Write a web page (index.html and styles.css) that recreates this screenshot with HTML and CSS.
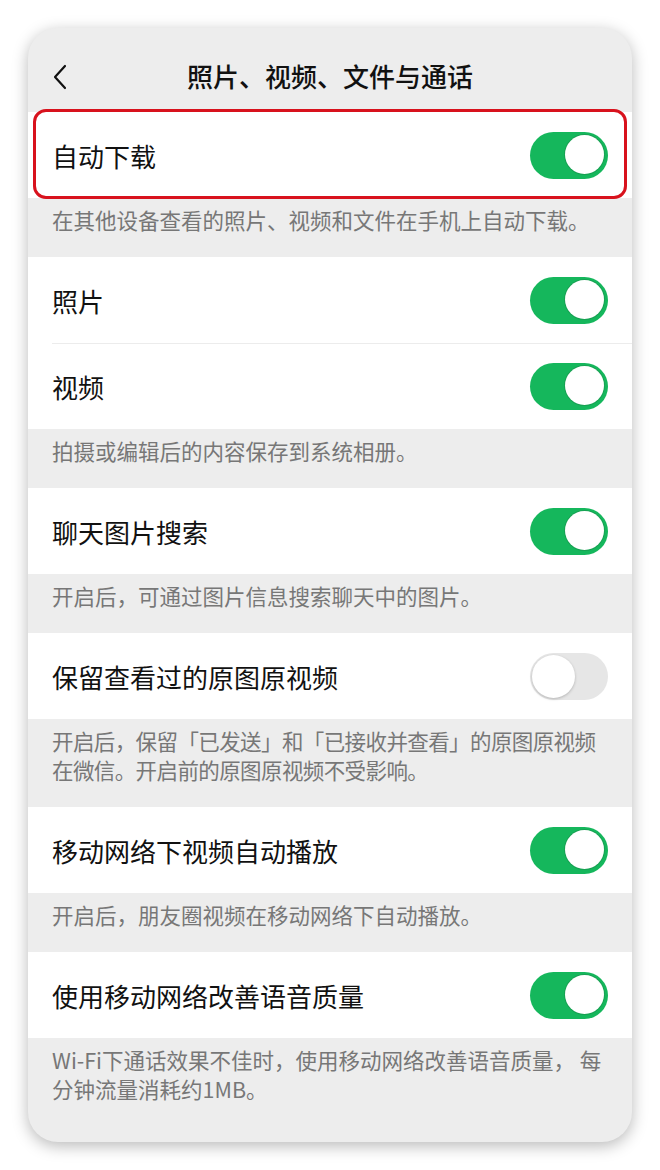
FILE: index.html
```html
<!DOCTYPE html>
<html lang="zh-CN">

<head>
    <meta charset="UTF-8">
    <meta name="viewport" content="width=device-width, initial-scale=1.0">
    <title>照片、视频、文件与通话</title>
    <link rel="stylesheet" href="styles.css">
</head>

<body>

    <div class="phone">
        <div class="nav">
            <svg class="back" width="16" height="26" viewBox="0 0 16 26">
                <path d="M13 2 L3 13 L13 24" fill="none" stroke="#111" stroke-width="2.2" stroke-linecap="round" stroke-linejoin="round"/>
            </svg>
            <div class="title">照片、视频、文件与通话</div>
        </div>

        <div class="group">
            <div class="row marked">
                <span class="label">自动下载</span>
                <span class="switch on"></span>
                <div class="highlight"></div>
            </div>
        </div>
        <p class="note">在其他设备查看的照片、视频和文件在手机上自动下载。</p>

        <div class="group">
            <div class="row">
                <span class="label">照片</span>
                <span class="switch on"></span>
            </div>
            <div class="row divided">
                <span class="label">视频</span>
                <span class="switch on"></span>
            </div>
        </div>
        <p class="note">拍摄或编辑后的内容保存到系统相册。</p>

        <div class="group">
            <div class="row">
                <span class="label">聊天图片搜索</span>
                <span class="switch on"></span>
            </div>
        </div>
        <p class="note">开启后，可通过图片信息搜索聊天中的图片。</p>

        <div class="group">
            <div class="row">
                <span class="label">保留查看过的原图原视频</span>
                <span class="switch"></span>
            </div>
        </div>
        <p class="note tight">开启后，保留「已发送」和「已接收并查看」的原图原视频在微信。开启前的原图原视频不受影响。</p>

        <div class="group">
            <div class="row">
                <span class="label">移动网络下视频自动播放</span>
                <span class="switch on"></span>
            </div>
        </div>
        <p class="note">开启后，朋友圈视频在移动网络下自动播放。</p>

        <div class="group">
            <div class="row">
                <span class="label">使用移动网络改善语音质量</span>
                <span class="switch on"></span>
            </div>
        </div>
        <p class="note">Wi-Fi下通话效果不佳时，使用移动网络改善语音质量， 每分钟流量消耗约1MB。</p>
    </div>

</body>

</html>
```

FILE: styles.css
```css
body {
    margin: 0;
    padding: 28px;
    background-color: #ffffff;
    font-family: "Noto Sans CJK SC", "Noto Sans", sans-serif;
    color: #111111;
}

.phone {
    width: 604px;
    height: 1114px;
    background-color: #ededed;
    border-radius: 30px;
    box-shadow: 0 4px 16px rgba(0, 0, 0, 0.28);
    overflow: hidden;
}

.nav {
    position: relative;
    height: 84px;
    display: flex;
    align-items: center;
    justify-content: center;
}

.back {
    position: absolute;
    left: 24px;
    top: 36px;
}

.title {
    font-size: 26px;
    font-weight: 500;
    margin-top: 10px;
}

.group {
    background-color: #ffffff;
}

.row {
    position: relative;
    height: 86px;
    display: flex;
    align-items: center;
    justify-content: space-between;
    padding: 0 24px;
}

.row.divided::before {
    content: "";
    position: absolute;
    top: 0;
    left: 24px;
    right: 0;
    border-top: 1px solid #ececec;
}

.label {
    font-size: 26px;
}

.switch {
    position: relative;
    width: 78px;
    height: 47px;
    border-radius: 24px;
    background-color: #e6e6e6;
}

.switch::after {
    content: "";
    position: absolute;
    top: 2px;
    left: 2px;
    width: 43px;
    height: 43px;
    border-radius: 50%;
    background-color: #ffffff;
    box-shadow: 0 1px 3px rgba(0, 0, 0, 0.22);
}

.switch.on {
    background-color: #15b75c;
}

.switch.on::after {
    top: 3px;
    left: 35px;
    width: 39px;
    height: 39px;
    box-shadow: 0 0 0 1px #17a052;
}

.highlight {
    position: absolute;
    top: -3px;
    bottom: -1px;
    left: 5px;
    right: 5px;
    border: 3px solid #d8121d;
    border-radius: 13px;
}

.note {
    margin: 0;
    padding: 7px 24px 23px;
    font-size: 21.5px;
    line-height: 29px;
    color: #777777;
}

.note.tight {
    letter-spacing: -0.6px;
}
```
